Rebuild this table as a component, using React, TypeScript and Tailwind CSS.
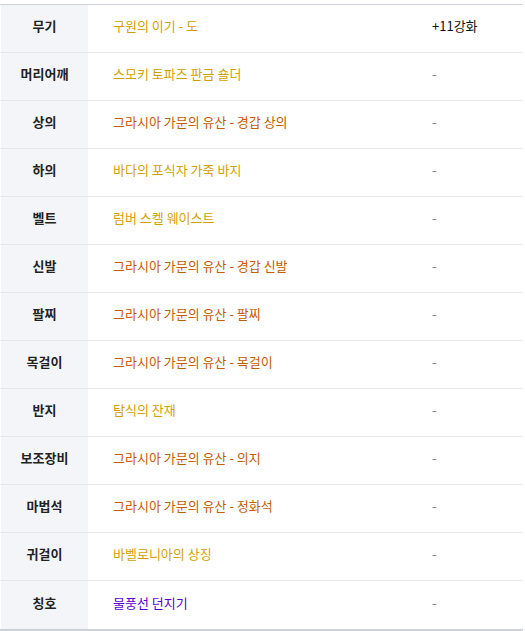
const rows: { slot: string; name: string; color: string; extra: string }[] = [
  { slot: "무기", name: "구원의 이기 - 도", color: "text-[#d39f00]", extra: "+11강화" },
  { slot: "머리어깨", name: "스모키 토파즈 판금 숄더", color: "text-[#d39f00]", extra: "-" },
  { slot: "상의", name: "그라시아 가문의 유산 - 경갑 상의", color: "text-[#c45c00]", extra: "-" },
  { slot: "하의", name: "바다의 포식자 가죽 바지", color: "text-[#d39f00]", extra: "-" },
  { slot: "벨트", name: "럼버 스켈 웨이스트", color: "text-[#d39f00]", extra: "-" },
  { slot: "신발", name: "그라시아 가문의 유산 - 경갑 신발", color: "text-[#c45c00]", extra: "-" },
  { slot: "팔찌", name: "그라시아 가문의 유산 - 팔찌", color: "text-[#c45c00]", extra: "-" },
  { slot: "목걸이", name: "그라시아 가문의 유산 - 목걸이", color: "text-[#c45c00]", extra: "-" },
  { slot: "반지", name: "탐식의 잔재", color: "text-[#d39f00]", extra: "-" },
  { slot: "보조장비", name: "그라시아 가문의 유산 - 의지", color: "text-[#c45c00]", extra: "-" },
  { slot: "마법석", name: "그라시아 가문의 유산 - 정화석", color: "text-[#c45c00]", extra: "-" },
  { slot: "귀걸이", name: "바벨로니아의 상징", color: "text-[#d39f00]", extra: "-" },
  { slot: "칭호", name: "물풍선 던지기", color: "text-[#5a00d2]", extra: "-" },
];

export default function App() {
  return (
    <div
      className="bg-white w-[525px] h-[631px] pt-1"
      style={{ fontFamily: '"Noto Sans CJK KR", "Noto Sans", sans-serif' }}
    >
      <div className="w-[523px] border-t border-b-2 border-[#cfd1d9]">
        {rows.map((r, i) => (
          <div
            key={r.slot}
            className={
              "grid grid-cols-[88px_319px_1fr] h-[48px] text-[13px] " +
              (i < rows.length - 1 ? "border-b border-[#e6e7ec]" : "h-[47px]")
            }
          >
            <div className="ml-px bg-[#f4f5f9] flex items-center justify-center pb-[5px] font-bold text-[#222]">
              {r.slot}
            </div>
            <div className={"flex items-center pl-[25px] pb-[5px] " + r.color}>{r.name}</div>
            <div
              className={
                "flex items-center pl-[25px] pb-[5px] " +
                (r.extra === "-" ? "text-[#7a7a85]" : "text-[#111]")
              }
            >
              {r.extra}
            </div>
          </div>
        ))}
      </div>
    </div>
  );
}
